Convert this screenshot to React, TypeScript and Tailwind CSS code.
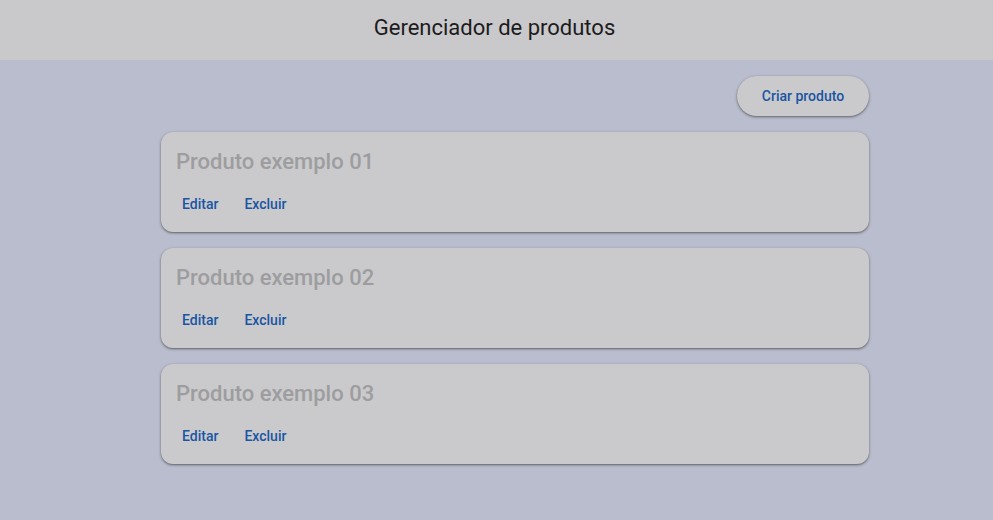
export default function App() {
  const produtos = ["Produto exemplo 01", "Produto exemplo 02", "Produto exemplo 03"];
  return (
    <div className="min-h-screen w-full bg-[#babdcd] font-['Roboto',sans-serif]">
      <header className="flex h-[60px] items-center justify-center bg-[#c9c9cb]">
        <h1 className="-mt-[5px] pr-1 text-[22px] leading-[28px] text-[#1d1b20]">Gerenciador de produtos</h1>
      </header>
      <main className="ml-[161px] w-[708px] pt-4">
        <div className="flex justify-end">
          <button className="h-10 w-[132px] rounded-full bg-[#cacacc] text-[14px] font-medium text-[#1a55a3] shadow-[0_1px_2px_rgba(0,0,0,0.35),0_1px_3px_1px_rgba(0,0,0,0.12)]">
            Criar produto
          </button>
        </div>
        <div className="mt-4 flex flex-col gap-4">
          {produtos.map((p) => (
            <div
              key={p}
              className="h-[100px] rounded-xl bg-[#cacacc] shadow-[0_1px_2px_rgba(0,0,0,0.4),0_1px_3px_1px_rgba(0,0,0,0.1)]"
            >
              <div className="pl-[15px] pt-[17px] text-[22px] font-medium leading-[26px] text-[#9d9d9f]">{p}</div>
              <div className="mt-[9px] flex gap-[2px] pl-[9px]">
                <button className="h-10 px-3 text-[14px] font-medium text-[#1a55a3]">Editar</button>
                <button className="h-10 px-3 text-[14px] font-medium text-[#1a55a3]">Excluir</button>
              </div>
            </div>
          ))}
        </div>
      </main>
    </div>
  );
}
